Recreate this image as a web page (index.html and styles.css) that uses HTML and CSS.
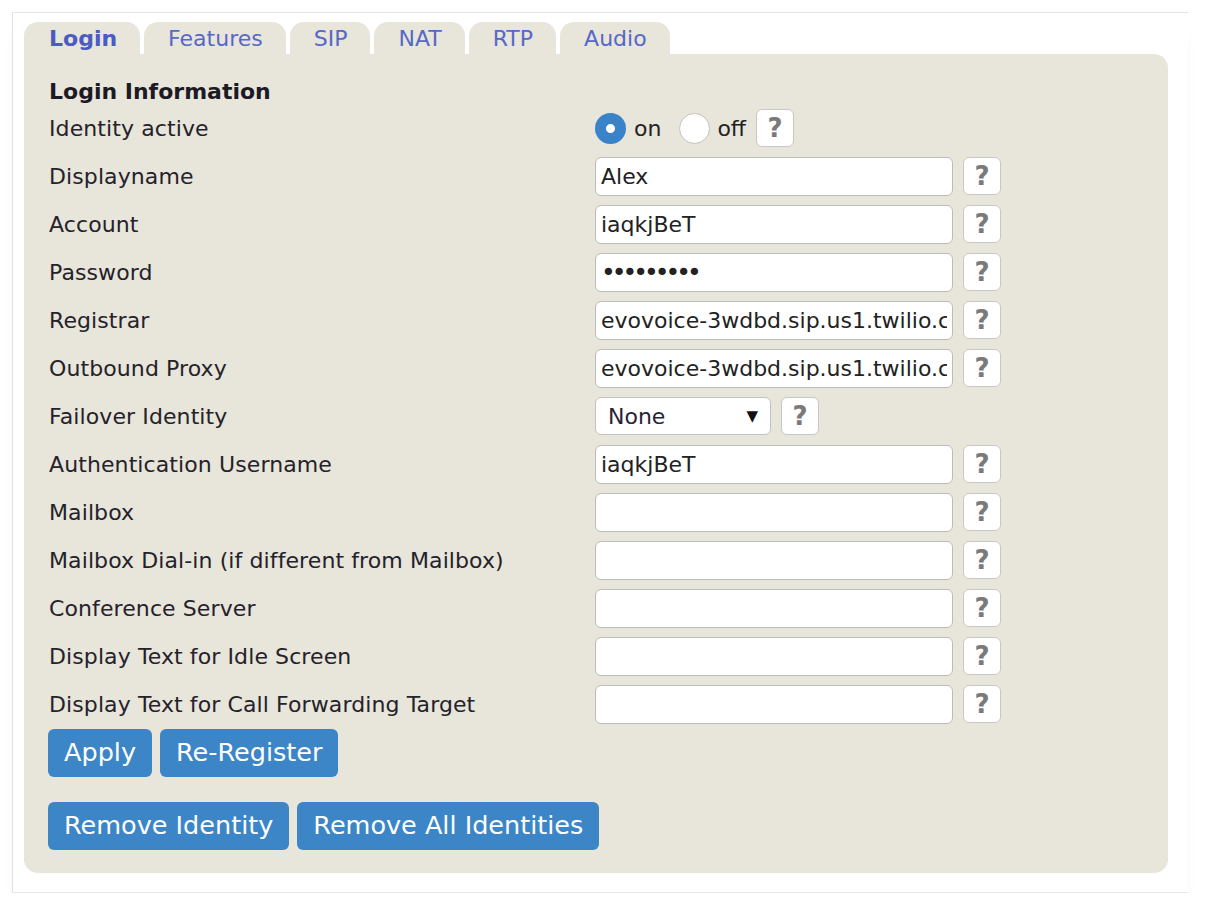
FILE: index.html
```html
<!DOCTYPE html>
<html lang="en">
<head>
<meta charset="utf-8">
<title>Identity 1 - Login</title>
<link rel="stylesheet" href="styles.css">
</head>
<body>
<div class="card">
  <nav class="tabs">
    <a class="tab active" href="#">Login</a>
    <a class="tab" href="#">Features</a>
    <a class="tab" href="#">SIP</a>
    <a class="tab" href="#">NAT</a>
    <a class="tab" href="#">RTP</a>
    <a class="tab" href="#">Audio</a>
  </nav>
  <form class="panel">
    <h2 class="section">Login Information</h2>
    <div class="rows">
      <div class="row">
        <span class="label">Identity active</span>
        <div class="field">
          <label class="radio"><input type="radio" name="active" checked><span>on</span></label>
          <label class="radio"><input type="radio" name="active"><span>off</span></label>
          <button type="button" class="help">?</button>
        </div>
      </div>
      <div class="row">
        <span class="label">Displayname</span>
        <div class="field"><input class="text" type="text" value="Alex"><button type="button" class="help">?</button></div>
      </div>
      <div class="row">
        <span class="label">Account</span>
        <div class="field"><input class="text" type="text" value="iaqkjBeT"><button type="button" class="help">?</button></div>
      </div>
      <div class="row">
        <span class="label">Password</span>
        <div class="field"><input class="text pass" type="password" value="secretpwd"><button type="button" class="help">?</button></div>
      </div>
      <div class="row">
        <span class="label">Registrar</span>
        <div class="field"><input class="text" type="text" value="evovoice-3wdbd.sip.us1.twilio.com"><button type="button" class="help">?</button></div>
      </div>
      <div class="row">
        <span class="label">Outbound Proxy</span>
        <div class="field"><input class="text" type="text" value="evovoice-3wdbd.sip.us1.twilio.com"><button type="button" class="help">?</button></div>
      </div>
      <div class="row">
        <span class="label">Failover Identity</span>
        <div class="field">
          <div class="select-wrap"><select class="select"><option>None</option></select></div>
          <button type="button" class="help">?</button>
        </div>
      </div>
      <div class="row">
        <span class="label">Authentication Username</span>
        <div class="field"><input class="text" type="text" value="iaqkjBeT"><button type="button" class="help">?</button></div>
      </div>
      <div class="row">
        <span class="label">Mailbox</span>
        <div class="field"><input class="text" type="text" value=""><button type="button" class="help">?</button></div>
      </div>
      <div class="row">
        <span class="label">Mailbox Dial-in (if different from Mailbox)</span>
        <div class="field"><input class="text" type="text" value=""><button type="button" class="help">?</button></div>
      </div>
      <div class="row">
        <span class="label">Conference Server</span>
        <div class="field"><input class="text" type="text" value=""><button type="button" class="help">?</button></div>
      </div>
      <div class="row">
        <span class="label">Display Text for Idle Screen</span>
        <div class="field"><input class="text" type="text" value=""><button type="button" class="help">?</button></div>
      </div>
      <div class="row">
        <span class="label">Display Text for Call Forwarding Target</span>
        <div class="field"><input class="text" type="text" value=""><button type="button" class="help">?</button></div>
      </div>
    </div>
    <div class="actions">
      <button type="button" class="btn">Apply</button>
      <button type="button" class="btn">Re-Register</button>
    </div>
    <div class="actions second">
      <button type="button" class="btn">Remove Identity</button>
      <button type="button" class="btn">Remove All Identities</button>
    </div>
  </form>
</div>
</body>
</html>
```
FILE: styles.css
```css
* { box-sizing: border-box; }

html, body {
  margin: 0;
  padding: 0;
  background: #ffffff;
}

body {
  font-family: "DejaVu Sans", Verdana, sans-serif;
  font-size: 22px;
  color: #222222;
}

.card {
  margin: 12px 28px 0 12px;
  padding: 9px 20px 19px 11px;
  background: #ffffff;
  border-top: 1px solid #e2e2e2;
  border-left: 1px solid #e2e2e2;
  border-bottom: 1px solid #e6e6e6;
  box-shadow: 0 16px 14px -6px rgba(0, 0, 0, 0.07);
}

.tabs {
  display: flex;
  gap: 4px;
  height: 32px;
}

.tab {
  display: flex;
  align-items: center;
  height: 32px;
  padding: 0 23px 0 24px;
  background: #e8e5da;
  border-radius: 14px 14px 0 0;
  color: #5668c8;
  text-decoration: none;
  font-size: 22px;
}

.tab.active {
  font-weight: bold;
  color: #4a5bc2;
  padding: 0 23px 0 25px;
}

.panel {
  background: #e8e5da;
  border-radius: 0 14px 14px 14px;
  padding: 26px 25px 23px 25px;
  margin: 0;
}

.section {
  margin: 0;
  height: 24px;
  line-height: 24px;
  font-size: 22px;
  font-weight: bold;
  color: #1c1a24;
}

.rows {
  display: flex;
  flex-direction: column;
}

.row {
  display: grid;
  grid-template-columns: 546px 1fr;
  align-items: center;
  height: 48px;
}

.label {
  color: #24222a;
  white-space: nowrap;
  letter-spacing: 0.1px;
}

.field {
  display: flex;
  align-items: center;
  gap: 10px;
}

.text {
  width: 358px;
  height: 39px;
  padding: 0 5px;
  border: 1px solid #bdbcb8;
  border-radius: 6px;
  background: #ffffff;
  font-family: "DejaVu Sans", Verdana, sans-serif;
  font-size: 22px;
  color: #222222;
  outline: none;
}

.text.pass {
  letter-spacing: -4px;
  font-size: 25px;
}

.help {
  width: 38px;
  height: 38px;
  padding: 0;
  border: 1px solid #c9c8c3;
  border-radius: 6px;
  background: #ffffff;
  font-family: "DejaVu Sans", Verdana, sans-serif;
  font-size: 26px;
  font-weight: bold;
  color: #7a7a7a;
  line-height: 1;
}

.radio {
  display: flex;
  align-items: center;
  gap: 8px;
}

.radio + .radio {
  margin-left: 8px;
  gap: 7px;
}

.radio input {
  appearance: none;
  -webkit-appearance: none;
  margin: 0;
  width: 31px;
  height: 31px;
  border-radius: 50%;
  border: 1px solid #c3c2bd;
  background: #ffffff;
}

.radio input:checked {
  border: none;
  background: radial-gradient(circle, #ffffff 0 4px, #3a83c8 5px);
}

.select-wrap {
  position: relative;
  width: 176px;
  height: 38px;
}

.select-wrap::after {
  content: "\25BC";
  position: absolute;
  right: 13px;
  top: 10px;
  font-size: 15px;
  color: #111111;
  pointer-events: none;
}

.select {
  appearance: none;
  -webkit-appearance: none;
  width: 100%;
  height: 100%;
  padding: 0 0 0 12px;
  border: 1px solid #c3c2bd;
  border-radius: 6px;
  background: #ffffff;
  font-family: "DejaVu Sans", Verdana, sans-serif;
  font-size: 22px;
  color: #2a2333;
}

.actions {
  display: flex;
  gap: 8px;
  margin-left: -1px;
  margin-top: 1px;
}

.actions.second {
  margin-top: 25px;
}

.btn {
  height: 48px;
  padding: 0 16px;
  border: none;
  border-radius: 6px;
  background: #3c86c8;
  color: #ffffff;
  font-family: "DejaVu Sans", Verdana, sans-serif;
  font-size: 25.5px;
  line-height: 1;
}
```
